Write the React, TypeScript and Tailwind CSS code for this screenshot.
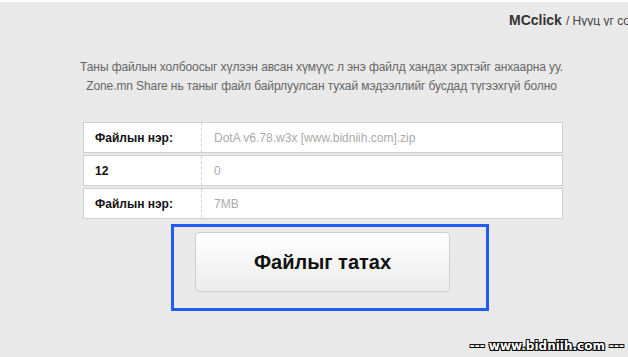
import React from 'react'

const rows = [
  { label: 'Файлын нэр:', value: 'DotA v6.78.w3x [www.bidniih.com].zip' },
  { label: '12', value: '0' },
  { label: 'Файлын нэр:', value: '7MB' },
]

export default function App() {
  return (
    <div className="relative w-[628px] h-[357px] overflow-hidden bg-[#e9e9e9] border-t-2 border-white font-['Liberation_Sans',Arial,sans-serif]">
      {/* Header */}
      <div className="pl-[509px] pt-[8px] whitespace-nowrap overflow-hidden h-[24px] flex items-baseline">
        <span className="text-[14px] font-bold text-[#333]">MCclick</span>
        <span className="text-[12px] text-[#444] ml-[4px]">/ Нууц үг солих</span>
      </div>

      {/* Notice */}
      <div className="mt-[32px] pl-[15px] text-center text-[12px] leading-[19px] text-[#666] tracking-[-0.1px]">
        <p>Таны файлын холбоосыг хүлээн авсан хүмүүс л энэ файлд хандах эрхтэйг анхаарна уу.</p>
        <p>Zone.mn Share нь таныг файл байрлуулсан тухай мэдээллийг бусдад түгээхгүй болно</p>
      </div>

      {/* File info */}
      <div className="ml-[83px] mt-[26px] w-[480px] flex flex-col gap-[2px]">
        {rows.map((row, i) => (
          <div key={i} className="h-[31px] flex bg-white border border-[#cfcfcf] text-[12px]">
            <div className="w-[118px] pl-[11px] flex items-center font-bold text-[#111] border-r border-dashed border-[#d4d4d4]">
              {row.label}
            </div>
            <div className="pl-[12px] flex items-center text-[#aaa]">{row.value}</div>
          </div>
        ))}
      </div>

      {/* Download button */}
      <div className="ml-[171px] mt-[5px] w-[318px] h-[87px] border-[3px] border-[#1e5cf2] pt-[5px] pl-[21px]">
        <button className="w-[255px] h-[60px] rounded-[4px] border border-[#d0d0d0] bg-gradient-to-b from-white to-[#ececec] text-[20px] font-bold text-[#111] font-['Liberation_Sans',Arial,sans-serif]">
          Файлыг татах
        </button>
      </div>

      {/* Watermark */}
      <div className="absolute right-[4px] bottom-[2px] text-[12px] font-bold text-white font-['DejaVu_Sans',Verdana,sans-serif] [text-shadow:1px_1px_0_#000,-1px_-1px_0_#000,1px_-1px_0_#000,-1px_1px_0_#000]">
        --- www.bidniih.com ---
      </div>
    </div>
  )
}
